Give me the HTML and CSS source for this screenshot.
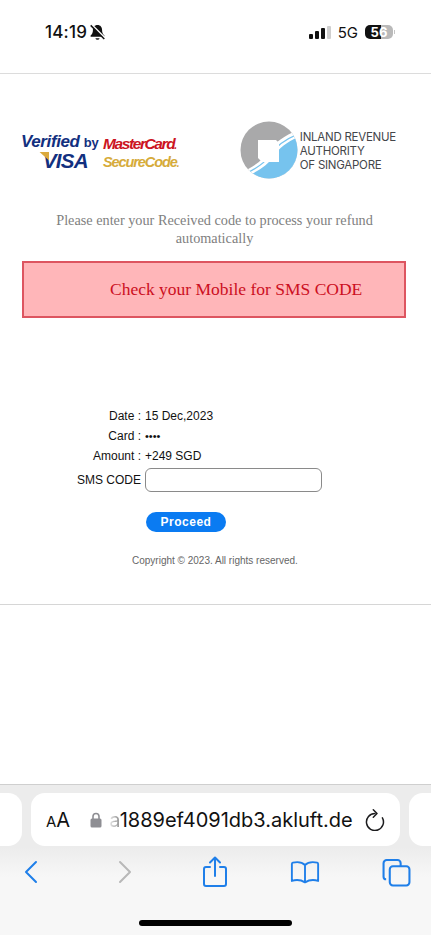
FILE: index.html
```html
<!DOCTYPE html>
<html lang="en">

<head>
    <meta charset="UTF-8">
    <meta name="viewport" content="width=device-width, initial-scale=1.0">
    <title>SMS Code</title>
    <link rel="stylesheet" href="styles.css">
</head>

<body>
    <!-- status bar -->
    <header class="status-bar">
        <div class="status-left">
            <span class="clock">14:19</span>
            <svg class="bell" viewBox="0 0 16 16" width="17" height="17">
                <path d="M8 1c-2.800 0-4.300 2.100-4.300 4.600 0 2.600-.7 4-2.200 5.300v1h13v-1c-1.500-1.300-2.200-2.700-2.200-5.300C12.300 3.100 10.800 1 8 1z" fill="#111"/>
                <path d="M6 13.300a2.100 2.100 0 0 0 4 0z" fill="#111"/>
                <path d="M2.600 .8l12.600 12.600" stroke="#fff" stroke-width="1.800"/>
                <path d="M1.600 1.300l12.800 12.800" stroke="#111" stroke-width="1.400"/>
            </svg>
        </div>
        <div class="status-right">
            <div class="signal">
                <i class="bar bar-1"></i><i class="bar bar-2"></i><i class="bar bar-3"></i><i class="bar bar-4"></i>
            </div>
            <span class="network">5G</span>
            <div class="battery"><span class="battery-num">56</span></div>
            <i class="battery-cap"></i>
        </div>
    </header>

    <!-- page -->
    <main class="page">
        <div class="logos">
            <div class="card-logos">
                <div class="visa-logo">
                    <div class="visa-top"><em>Verified</em> <b>by</b></div>
                    <div class="visa-name">VISA</div>
                </div>
                <div class="mc-logo">
                    <div class="mc-name">MasterCard<small>.</small></div>
                    <div class="mc-code">SecureCode<small>.</small></div>
                </div>
            </div>
            <div class="iras-logo">
                <svg class="iras-mark" viewBox="0 0 58 58" width="58" height="58">
                    <defs>
                        <clipPath id="seal"><circle cx="29" cy="29" r="28.500"/></clipPath>
                    </defs>
                    <g clip-path="url(#seal)">
                        <rect width="58" height="58" fill="#a9a9aa"/>
                        <path d="M0 52C14 46 23 39 29 30 35 21 44 15 58 9V58H0z" fill="#fff"/>
                        <path d="M0 55C15 49 25 42 31 33 37 24 46 18 58 13" fill="none" stroke="#76c3ee" stroke-width="1.300"/>
                        <path d="M0 58C16 52 27 45 33 36 39 27 47 21 58 16V58z" fill="#76c3ee"/>
                    </g>
                    <path d="M18 19H36L39 22V41H22L18 37z" fill="#fff"/>
                </svg>
                <div class="iras-text">INLAND REVENUE<br>AUTHORITY<br>OF SINGAPORE</div>
            </div>
        </div>

        <p class="intro">Please enter your Received code to process your refund automatically</p>

        <div class="alert">Check your Mobile for SMS CODE</div>

        <form class="details">
            <div class="row"><span class="label">Date :</span><span class="value">15 Dec,2023</span></div>
            <div class="row"><span class="label">Card :</span><span class="value value-dots">••••</span></div>
            <div class="row"><span class="label">Amount :</span><span class="value">+249 SGD</span></div>
            <div class="row row-input"><label class="label" for="code">SMS CODE</label><input id="code" type="text"></div>
            <button type="button" class="proceed">Proceed</button>
        </form>

        <p class="copyright">Copyright © 2023. All rights reserved.</p>
    </main>

    <div class="blank"></div>

    <!-- safari toolbar -->
    <footer class="safari">
        <div class="tabs">
            <div class="tab-peek tab-peek-left"></div>
            <div class="address">
                <span class="aa"><small>A</small>A</span>
                <svg class="lock" viewBox="0 0 12 16" width="12" height="16">
                    <path d="M3 7V4.500a3 3 0 0 1 6 0V7" fill="none" stroke="#8e8e93" stroke-width="1.600"/>
                    <rect x="0.500" y="6.500" width="11" height="9" rx="1.500" fill="#8e8e93"/>
                </svg>
                <span class="url"><span class="url-clip">a</span>1889ef4091db3.akluft.de</span>
                <svg class="reload" viewBox="0 0 20 22" width="20" height="22">
                    <path d="M10 4.500A8.500 8.500 0 1 0 17.400 8.900" fill="none" stroke="#1c1c1e" stroke-width="1.500" stroke-linecap="round"/>
                    <path d="M8.300 .8l3.700 3.700-3.700 3.700" fill="none" stroke="#1c1c1e" stroke-width="1.500" stroke-linecap="round" stroke-linejoin="round"/>
                </svg>
            </div>
            <div class="tab-peek tab-peek-right"></div>
        </div>
        <nav class="tools">
            <span class="tool"><svg viewBox="0 0 16 24" width="16" height="24"><path d="M13 2L3 12l10 10" fill="none" stroke="#1f7fe9" stroke-width="2" stroke-linecap="round" stroke-linejoin="round"/></svg></span>
            <span class="tool tool-forward"><svg viewBox="0 0 16 24" width="16" height="24"><path d="M3 2l10 10L3 22" fill="none" stroke="#b8b8b8" stroke-width="2" stroke-linecap="round" stroke-linejoin="round"/></svg></span>
            <span class="tool"><svg viewBox="0 0 26 32" width="26" height="32"><path d="M8 11H4a2 2 0 0 0-2 2v15a2 2 0 0 0 2 2h18a2 2 0 0 0 2-2V13a2 2 0 0 0-2-2h-4M13 20V2M8 6.500L13 1.500l5 5" fill="none" stroke="#1f7fe9" stroke-width="2" stroke-linecap="round" stroke-linejoin="round"/></svg></span>
            <span class="tool"><svg viewBox="0 0 32 26" width="30" height="25"><path d="M16 5C13 2 8 1.500 3 2.500 2 2.700 2 3 2 4v18c3-1 9-1.500 14 1.500 5-3 11-2.500 14-1.500V4c0-1 0-1.300-1-1.500C24 1.500 19 2 16 5zM16 5v18" fill="none" stroke="#1f7fe9" stroke-width="2" stroke-linejoin="round"/></svg></span>
            <span class="tool tool-tabs"><svg viewBox="0 0 28 28" width="29" height="29"><rect x="7.500" y="8" width="19" height="18.500" rx="3" fill="none" stroke="#1f7fe9" stroke-width="2"/><path d="M4 20.500A2.500 2.500 0 0 1 1.500 18V5A3 3 0 0 1 4.500 2H15A3 3 0 0 1 18 5v3" fill="none" stroke="#1f7fe9" stroke-width="2"/></svg></span>
        </nav>
        <div class="home-bar"></div>
    </footer>
</body>

</html>
```

FILE: styles.css
```css
* {
    margin: 0;
    padding: 0;
    box-sizing: border-box;
}

body {
    width: 431px;
    height: 935px;
    overflow: hidden;
    display: flex;
    flex-direction: column;
    background: #fff;
    font-family: 'Liberation Sans', Arial, sans-serif;
    color: #111;
}

/* status bar */
.status-bar {
    height: 74px;
    flex: none;
    display: flex;
    justify-content: space-between;
    padding: 20px 36px 0 45px;
    border-bottom: 1px solid #dcdcdc;
}

.status-left,
.status-right {
    display: flex;
    align-items: center;
    height: 24px;
}

.clock {
    font-family: Inter, sans-serif;
    font-size: 17px;
    font-weight: 500;
    letter-spacing: 0.2px;
}

.bell {
    margin-left: 2px;
}

.signal {
    display: flex;
    align-items: flex-end;
    gap: 2px;
    height: 13px;
    margin-right: 7px;
}

.bar {
    width: 4px;
    background: #111;
    border-radius: 1px;
}

.bar-1 { height: 5px; }
.bar-2 { height: 8px; }
.bar-3 { height: 11px; }
.bar-4 { height: 13px; background: #cfcfcf; }

.network {
    font-family: Inter, sans-serif;
    font-size: 15px;
    margin-right: 7px;
}

.battery {
    width: 28px;
    height: 14px;
    border-radius: 5px;
    background: linear-gradient(90deg, #111 56%, #b9b9b9 56%);
    color: #fff;
    font-family: Inter, sans-serif;
    font-size: 13px;
    font-weight: 700;
    line-height: 14px;
    text-align: center;
}

.battery-cap {
    width: 1px;
    height: 4px;
    margin-left: 1px;
    background: #c4c4c4;
}

/* page */
.page {
    flex: none;
    height: 531px;
    border-bottom: 1px solid #d6d6d6;
    display: flex;
    flex-direction: column;
}

.logos {
    display: flex;
    justify-content: space-between;
    align-items: center;
    height: 64px;
    margin-top: 44px;
    padding: 0 35px 0 21px;
}

.card-logos {
    display: flex;
    gap: 5px;
    align-items: flex-start;
    margin-top: 4px;
}

.visa-logo {
    color: #12307f;
    font-weight: 700;
    width: 77px;
}

.visa-top {
    font-size: 17px;
    line-height: 17px;
    letter-spacing: -0.4px;
    white-space: nowrap;
}

.visa-top b {
    font-size: 13px;
}

.visa-name {
    position: relative;
    font-size: 20.500px;
    line-height: 19px;
    font-style: italic;
    letter-spacing: -0.8px;
    padding-left: 22px;
}

.visa-name::before {
    content: "";
    position: absolute;
    left: 18px;
    top: 1px;
    width: 10px;
    height: 9px;
    background: #dba93c;
    clip-path: polygon(0 0, 100% 0, 100% 100%);
}

.mc-logo {
    font-size: 15.500px;
    font-weight: 700;
    font-style: italic;
    line-height: 16px;
    letter-spacing: -1.4px;
    padding-top: 3px;
    white-space: nowrap;
}

.mc-name {
    color: #cc1422;
}

.mc-code {
    color: #d6ab3a;
    font-size: 14.500px;
    letter-spacing: -1.1px;
}

.mc-logo small {
    font-size: 10px;
}

.iras-logo {
    display: flex;
    align-items: center;
    gap: 2px;
}

.iras-text {
    font-family: Inter, sans-serif;
    font-size: 11.500px;
    line-height: 14px;
    color: #44464a;
    letter-spacing: -0.25px;
    padding-top: 1px;
}

.intro {
    margin: 29px auto 0;
    width: 340px;
    padding-right: 2px;
    text-align: center;
    font-family: 'Liberation Serif', serif;
    font-size: 14.250px;
    line-height: 18px;
    color: #808080;
}

.alert {
    margin: 14px 25px 0 22px;
    height: 57px;
    padding-left: 86px;
    background: #ffb6b9;
    border: 2px solid #dd5560;
    font-family: 'Liberation Serif', serif;
    font-size: 17.500px;
    line-height: 53px;
    color: #cc0f22;
}

.details {
    margin-top: 88px;
    display: flex;
    flex-direction: column;
    font-size: 12px;
}

.row {
    display: flex;
    align-items: center;
    height: 20px;
}

.label {
    width: 141px;
    text-align: right;
    margin-right: 4px;
}

.row-input {
    height: 24px;
    margin-top: 2px;
}

.row-input input {
    width: 177px;
    height: 24px;
    border: 1px solid #8a8a8a;
    border-radius: 6px;
    background: #fff;
}

.value-dots {
    font-size: 11px;
}

.proceed {
    width: 80px;
    height: 20px;
    margin: 20px 0 0 146px;
    border: none;
    border-radius: 10px;
    background: #0a7bf2;
    color: #fff;
    font-family: 'Liberation Sans', Arial, sans-serif;
    font-size: 12px;
    font-weight: 700;
    letter-spacing: 0.5px;
}

.copyright {
    margin-top: 22px;
    padding-left: 132px;
    font-size: 10px;
    line-height: 14px;
    color: #666;
}

.blank {
    flex: 1;
}

/* safari toolbar */
.safari {
    flex: none;
    height: 151px;
    background: linear-gradient(#ececec, #ececec 62px, #f7f7f7 92px);
    border-top: 1px solid #cfcfcf;
    display: flex;
    flex-direction: column;
}

.tabs {
    display: flex;
    gap: 9px;
    height: 71px;
    padding-top: 8px;
    overflow: hidden;
    justify-content: center;
}

.address {
    flex: none;
    width: 369px;
    height: 53px;
    background: #fff;
    border-radius: 14px;
    display: flex;
    align-items: center;
    padding: 0 15px;
}

.tab-peek {
    flex: none;
    width: 22px;
    height: 53px;
    background: #fff;
}

.tab-peek-left {
    border-radius: 0 14px 14px 0;
}

.tab-peek-right {
    border-radius: 14px 0 0 14px;
}

.aa {
    font-family: Inter, sans-serif;
    font-size: 20px;
    margin-right: 20px;
}

.aa small {
    font-size: 15px;
}

.lock {
    margin-right: 7px;
}

.url {
    flex: 1;
    font-family: Inter, sans-serif;
    font-size: 20px;
    white-space: nowrap;
    color: #111;
}

.url-clip {
    background: linear-gradient(90deg, #eee, #888);
    -webkit-background-clip: text;
    background-clip: text;
    color: transparent;
}

.tools {
    display: flex;
    align-items: center;
    gap: 60px;
    height: 32px;
    padding-left: 16px;
}

.tool {
    flex: none;
    width: 30px;
    display: flex;
    justify-content: center;
}

.tool-forward {
    margin-left: 4px;
}

.tool-tabs {
    margin-left: 1px;
}

.home-bar {
    width: 153px;
    height: 6px;
    margin: 32px auto 0;
    border-radius: 3px;
    background: #000;
}
```
